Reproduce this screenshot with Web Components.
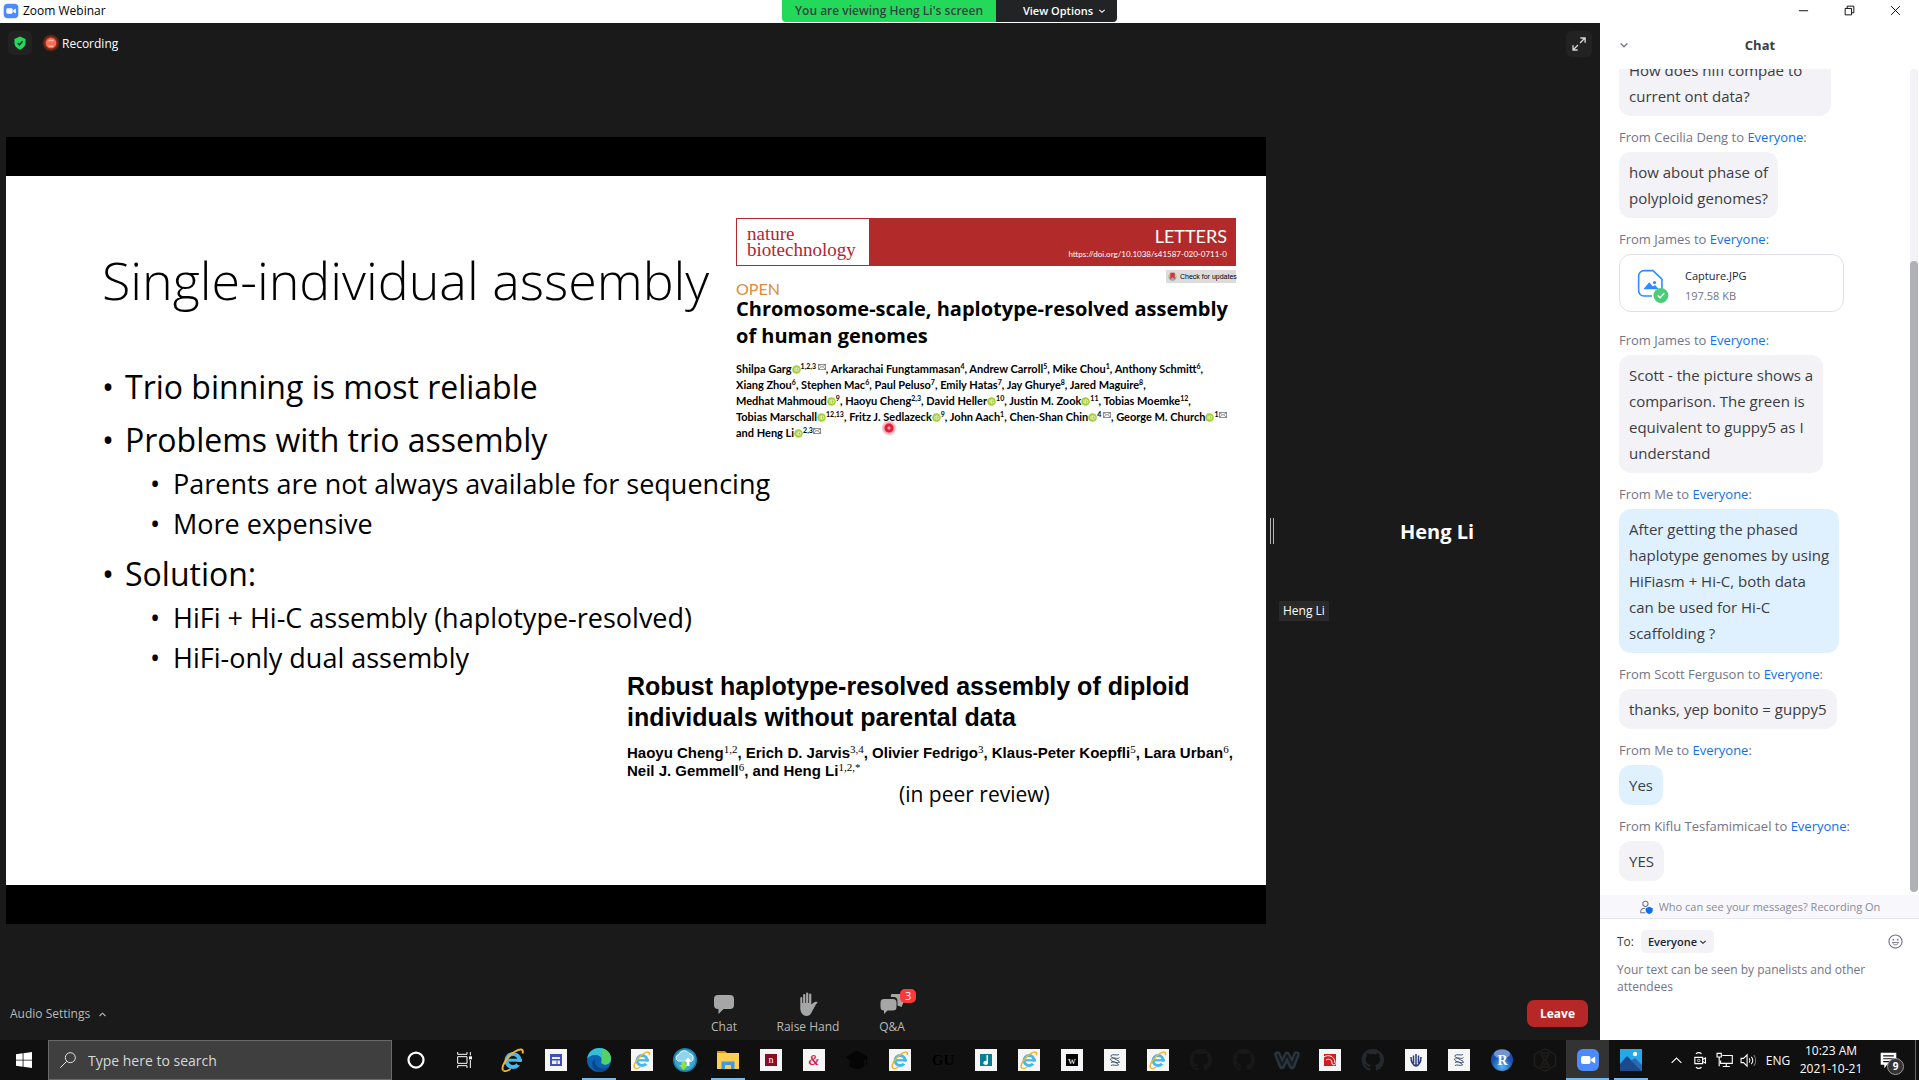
<!DOCTYPE html>
<html lang="en">
<head>
<meta charset="utf-8">
<title>Zoom Webinar</title>
<style>
html,body{margin:0;height:100%;overflow:hidden}
body{font-family:"Open Sans","Noto Sans",sans-serif;background:#1a1a1a}
</style>
</head>
<body>
<webinar-desktop></webinar-desktop>
<script>
const IE = `<circle cx="12" cy="12.5" r="6.6" fill="none" stroke="#45b8ec" stroke-width="4"/><path d="M6 12.2h15" stroke="#45b8ec" stroke-width="3"/><path d="M15 14h8v3.2h-6z" fill="var(--tile,#101010)"/><path d="M2.500 22.500C-1 20 6 8 14 3.500c5-3 9-3 7.500 2" fill="none" stroke="#f3b32a" stroke-width="2"/><path d="M2.500 22.500c2 1.500 5 0 7-1.500" fill="none" stroke="#f3b32a" stroke-width="1.600"/>`;
const TILE = inner => `<rect x="1" y="1" width="22" height="22" fill="#f6f6f6"/>${inner}`;
const CAT = `<path d="M12 .8a11.200 11.200 0 0 0-3.600 21.900c.6.1.8-.3.800-.6v-2.200c-3.100.7-3.800-1.300-3.800-1.300-.5-1.300-1.300-1.700-1.300-1.700-1-.7.1-.7.1-.7 1.100.1 1.700 1.200 1.700 1.200 1 1.700 2.700 1.200 3.300.9.1-.7.400-1.200.7-1.500-2.500-.3-5.200-1.300-5.200-5.600 0-1.200.4-2.200 1.200-3-.1-.3-.5-1.400.1-3 0 0 1-.3 3.100 1.200a10.800 10.800 0 0 1 5.700 0c2.200-1.500 3.100-1.200 3.100-1.200.6 1.600.2 2.700.1 3 .7.800 1.100 1.800 1.100 3 0 4.300-2.600 5.300-5.100 5.600.4.300.8 1 .8 2.100v3.100c0 .3.200.7.800.6A11.200 11.200 0 0 0 12 .8z"/>`;
const HELIX = `<path d="M8 7.500c2-2 6 .5 8-1M7.500 11c2.500-3 6.500 1 9-1.500M8 14.500c2.500-2 6 1.500 8.500-.5M8 17.500c2-1.500 5 .8 7.500-.5M8 7.500c-1 3 8.500 4 8.500 7M7.500 11c0 3 8 3.500 8 6" fill="none" stroke="#3c5573" stroke-width="1"/>`;
const CAM = `<rect x="1" y="1" width="22" height="22" rx="6" fill="#4a8cff"/><rect x="5" y="8" width="9.500" height="8" rx="2" fill="#fff"/><path d="M15.200 11l4-2.600v7.200l-4-2.600z" fill="#fff"/>`;
const ICONS = {
 cam: CAM,
 shield:`<path d="M12 1l9.500 4v7c0 5.500-4 9-9.500 11.500C6.500 21 2.500 17.500 2.500 12V5z" fill="#23d959"/><path d="M8 12l3 3 5.500-6" fill="none" stroke="#1a1a1a" stroke-width="2.200"/>`,
 rec:`<defs><radialGradient id="g"><stop offset=".5" stop-color="#e8401a" stop-opacity=".8"/><stop offset="1" stop-color="#e8401a" stop-opacity="0"/></radialGradient></defs><circle cx="12" cy="12" r="12" fill="url(#g)"/><circle cx="12" cy="12" r="7" fill="#ff6a55"/><path d="M7.500 9.500a5 4 0 0 1 9 0z" fill="#ffb9ad"/><path d="M8 15.500h8a5 4 0 0 1-8 0z" fill="#ffd5cf"/>`,
 min:`<path d="M2 12.500h20" stroke="#000" stroke-width="2"/>`,
 restore:`<path d="M2.500 7.500h14v14h-14zM7 7V2.500h14.500V17H17" fill="none" stroke="#000" stroke-width="2"/>`,
 close:`<path d="M2.500 2.500l19 19m0-19l-19 19" stroke="#000" stroke-width="2"/>`,
 down:`<path d="M4 8.500l8 7.500 8-7.500" fill="none" stroke="currentColor" stroke-width="3.400"/>`,
 up:`<path d="M4 16l8-7.500 8 7.500" fill="none" stroke="currentColor" stroke-width="3"/>`,
 expand:`<path d="M13.500 10.500L21 3M14 3h7.200v7.200M10.500 13.500L3 21M3 14v7h7" fill="none" stroke="#d6d6d6" stroke-width="2"/>`,
 file:`<path d="M14 25H6.500A5 5 0 0 1 1.500 20V6a5 5 0 0 1 5-5H15l8.500 8v9" transform="translate(0 .5)" fill="none" stroke="#2d8cff" stroke-width="1.500"/><path d="M6 19l5.500-6.500 3.500 4 2-1.500 3.500 4z" fill="#2d8cff"/><circle cx="16.500" cy="12.800" r="1.500" fill="#2d8cff"/><circle cx="22.500" cy="25" r="7" fill="#4ccb78"/><path d="M19.500 25l2.200 2.200 4-4.400" fill="none" stroke="#fff" stroke-width="1.300"/>`,
 privacy:`<circle cx="11" cy="6.500" r="4.500" fill="none" stroke="#747487" stroke-width="1.800"/><path d="M11 22H3c-1-5 2-8 7.500-8" fill="none" stroke="#747487" stroke-width="1.800"/><path d="M17.500 11.500l6 2.500v4c0 3-2.500 5-6 6-3.500-1-6-3-6-6v-4z" fill="#0e71eb"/>`,
 smile:`<circle cx="12" cy="12" r="10.500" fill="none" stroke="#747487" stroke-width="1.800"/><path d="M7 13.500c1.500 5 8.500 5 10 0z" fill="none" stroke="#747487" stroke-width="1.500"/><circle cx="8.500" cy="9" r="1.400" fill="#747487"/><circle cx="15.500" cy="9" r="1.400" fill="#747487"/>`,
 chat:`<path d="M6 3h12a4 4 0 0 1 4 4v6a4 4 0 0 1-4 4h-6.500L6.500 22v-5H6a4 4 0 0 1-4-4V7a4 4 0 0 1 4-4z" fill="#a6a6a6"/>`,
 hand:`<path d="M5.500 21C4 18 4.300 16 4.300 14V6a1 1 0 0 1 2 0v5h.8V3a1.100 1.100 0 0 1 2.200 0v8h.8V1.500a1.100 1.100 0 0 1 2.200 0V11h.8V2.500a1.100 1.100 0 0 1 2.200 0v10l2.500-2c1-1 4.300-1 3.700 0-2 2-3.500 5.500-5.500 9C14 25.500 8 25 5.500 21z" fill="#a6a6a6"/>`,
 qa:`<path d="M12 2h8a3.500 3.500 0 0 1 3.500 3.500v5L21.500 15l-4-1.500V9a4 4 0 0 0-4-4H11c-.5-1.500 0-3 1-3z" fill="#a6a6a6"/><path d="M4 7h9a3.500 3.500 0 0 1 3.500 3.500v4.500A3.500 3.500 0 0 1 13 18.500H7.500L4 22v-3.500A3.500 3.500 0 0 1 .5 15v-4.500A3.500 3.500 0 0 1 4 7z" fill="#a6a6a6"/>`,
 orcid:`<circle cx="12" cy="12" r="11.500" fill="#a6ce39"/><path d="M8 7v10M11.500 7.500v9h2.500a4.500 4.500 0 0 0 0-9z" fill="none" stroke="#fff" stroke-width="1.800"/>`,
 mail:`<path d="M1.500 4.500h21v15h-21zl10.500 8 10.500-8M1.500 19.500l7-8m14 8l-7-8" fill="none" stroke="#444" stroke-width="1.800"/>`,
 crossmark:`<circle cx="12" cy="12" r="11" fill="#d9c36a"/><path d="M1 12a11 11 0 0 0 22 0l-11 4z" fill="#79b5c4"/><path d="M6 2h12v17l-6-5-6 5z" fill="#d8324a"/>`,
 win:`<path d="M0 3.400L10 2v9.500H0zM11.200 1.800L24 0v11.500H11.200zM0 12.600h10V22L0 20.600zM11.200 12.600H24V24l-12.800-1.800z" fill="#fff"/>`,
 search:`<circle cx="15.500" cy="8.500" r="7.500" fill="none" stroke="#e6e6e6" stroke-width="1.500"/><path d="M10 14L.5 23.500" stroke="#e6e6e6" stroke-width="1.500"/>`,
 cortana:`<circle cx="12" cy="12" r="10" fill="none" stroke="#fff" stroke-width="3"/>`,
 taskview:`<path d="M2.500 0v3.500h14V0M2.500 24v-3.500h14V24M2.500 7h14v10h-14zM21.500 0v5M21.500 12v12" fill="none" stroke="#fff" stroke-width="1.500"/><path d="M19.500 6.500h4.500v4.500h-4.500z" fill="#fff"/>`,
 ie:IE,
 ietile:TILE(`<g transform="translate(3 3) scale(.76)" style="--tile:#f6f6f6">${IE}</g>`),
 news:TILE(`<rect x="6" y="6" width="12" height="12" fill="#3f51b5"/><path d="M8 9h8v2H8zM8 12.500h4.500V16H8zM13.500 12.500H16V16h-2.500z" fill="#eef"/>`),
 edge:`<circle cx="12" cy="12" r="12" fill="#0c62b4"/><path d="M.2 11C1 4 6 0 12 0c7 0 12 5 12 10.500 0 4-3 6-6 6s-4-1.500-3.500-3c1-4-2-6.500-6-6.500S1 9 .2 11z" fill="#35c0d8"/><path d="M14 .2C20 1 24 5.500 24 10.500c0 4-3 6-6 6s-4-1.500-3.500-3c1-5 1-9-.5-13.300z" fill="#55d267"/><path d="M8.500 11.500c-1.500 5 3 9.500 8.500 9 2-.2 4-1 5.500-2A12 12 0 0 1 12 24C7 23 4.500 18 5.500 14c.5-1.500 1.500-2.500 3-2.500z" fill="#0a4a8c"/>`,
 cloud:`<circle cx="12" cy="12" r="12" fill="#1d7ea8"/><circle cx="12" cy="12" r="10.500" fill="#3ba7cf"/><path d="M5 13a3.500 3.500 0 0 1 1-6.500 5.500 5.500 0 0 1 10-1 4.500 4.500 0 0 1 2.500 8z" fill="#8fd3ec" stroke="#e8f8ff"/><path d="M8.500 13v4H6l4.500 5 4.500-5h-2.500v-4z" fill="#8fe635"/><path d="M13.500 18v-5H12l3-3.500 3 3.500h-1.500v5z" fill="#fff"/>`,
 folder:`<path d="M1 3h8l2 2v5H1z" fill="#d9930d"/><path d="M1 5h22v16H1z" fill="#fccf54"/><path d="M5.500 13.500h13V21H15v-4H9v4H5.500z" fill="#3a9be0"/>`,
 n:TILE(`<rect x="6" y="6" width="12" height="12" fill="#8a0d24"/><text x="12" y="15" font-size="10" font-family="Liberation Serif" fill="#fff" text-anchor="middle">n</text>`),
 amp:TILE(`<text x="12" y="17" font-size="14" font-style="italic" font-weight="700" font-family="Liberation Serif" fill="#d91e4a" text-anchor="middle">&amp;</text>`),
 cap:`<path d="M12 3L1 9.500 12 16l11-6.500zM5 13v5c3 3.500 11 3.500 14 0v-5l-7 4zM21.500 10v8" fill="#050505" stroke="#050505"/>`,
 gu:`<text x="12" y="16.500" font-size="15" font-weight="700" font-family="Liberation Serif" fill="#000" text-anchor="middle">GU</text>`,
 note:TILE(`<rect x="6" y="6" width="12" height="12" fill="#0b7f93"/><path d="M12.500 7h1.500v8a2.300 2 0 1 1-1.500-2z" fill="#fff"/>`),
 w:TILE(`<rect x="6" y="6" width="12" height="12" fill="#000"/><text x="12" y="15.500" font-size="11" font-family="Liberation Serif" fill="#fff" text-anchor="middle">w</text>`),
 helix:TILE(HELIX),
 cat1:`<g fill="#191717">${CAT}</g>`,
 cat2:`<g fill="#24292e">${CAT}</g>`,
 weebly:`<path d="M2.500 6.500L7 18l5-11 5 11 4.500-11.500" fill="none" stroke="#2b3540" stroke-width="6.500" stroke-linejoin="round" stroke-linecap="round"/><path d="M2.500 6.500L7 17l5-10 5 10 4.500-10.500" fill="none" stroke="#151a1e" stroke-width="2" stroke-linejoin="round" stroke-linecap="round"/>`,
 red:TILE(`<rect x="6" y="6" width="12" height="12" fill="#d01f1f"/><path d="M6 9c4-3 11-1 11 6M8 12c3-2 6 0 6 3s4 2 4 0" fill="none" stroke="#fff"/>`),
 lotus:TILE(`<path d="M12 6v11M9.500 7.500v8M14.500 7.500v8M7 9c0 5 1.500 8 5 9 3.500-1 5-4 5-9" fill="none" stroke="#2b3c7c" stroke-width="1.500"/>`),
 r:`<defs><radialGradient id="r" cx=".5" cy=".8"><stop stop-color="#58b8f4"/><stop offset="1" stop-color="#1650b0"/></radialGradient></defs><circle cx="12" cy="12" r="11" fill="url(#r)"/><ellipse cx="12" cy="6" rx="8" ry="4.500" fill="#fff" opacity=".4"/><text x="12.500" y="16.500" font-size="14" font-weight="700" font-family="Liberation Serif" fill="#fff" text-anchor="middle">R</text>`,
 hex:`<path d="M12 .8l10.500 5.700v11L12 23.200 1.500 17.500v-11zM8 5c0 7 8 7 8 14M16 5c0 7-8 7-8 14M8 5h8M8.500 8h7M8.500 16h7M8 19h8" fill="none" stroke="#211d1d" stroke-width="1.500"/>`,
 photo:`<path d="M1 1h22v22H1z" fill="#25a9e8"/><path d="M1 16l7-8 15 15H1z" fill="#1c4a8c"/><path d="M12 13l4-3 7 7v6z" fill="#2b68b0"/><circle cx="16" cy="6" r="2.200" fill="#fff"/>`,
 trayup:`<path d="M3 16.500l9-9 9 9" fill="none" stroke="#fff" stroke-width="2"/>`,
 traycam:`<path d="M4 7.500h11v9H4zM15 10.500l4-2v7l-4-2M5.500 2.500c2.500-2 5.500-2 8 0M5.500 21.500c2.500 2 5.500 2 8 0" fill="none" stroke="#fff" stroke-width="1.600"/><circle cx="9.500" cy="12" r="1.800" fill="none" stroke="#fff" stroke-width="1.100"/>`,
 net:`<path d="M9 5h14v11H6.500v-4M14.500 16v4M9.500 20.500h10M1.500 2h6v5h-6zM4.500 7v13" fill="none" stroke="#fff" stroke-width="1.600"/>`,
 vol:`<path d="M1.500 9h3.500l5-5v16l-5-5H1.500zM13 9c1.500 2 1.500 4 0 6M16 7c2.500 3 2.500 7 0 10" fill="none" stroke="#fff" stroke-width="1.500"/><path d="M19.500 4.500c3.500 4 3.500 11 0 15" fill="none" stroke="#777" stroke-width="1.500"/>`,
 notes:`<path d="M1 1h22v17H10l-4 5v-5H1z" fill="#fff"/><path d="M4.500 5.500h15M4.500 9.500h15M4.500 13.500h15" stroke="#101010" stroke-width="1.600"/>`,
};
const define = (name, html) => customElements.define(name, class extends HTMLElement {
  connectedCallback(){
    if (this.shadowRoot) return;
    const t = document.createElement('template');
    t.innerHTML = typeof html === 'function' ? html(this) : html;
    this.attachShadow({mode:'open'}).append(t.content.cloneNode(true));
  }
});

define('ui-icon', el => {
  const s = el.getAttribute('size') || 24, vb = el.getAttribute('box') || '0 0 24 24';
  return `<style>:host{display:inline-block;width:${s}px;height:${s}px;flex:none;line-height:0}svg{width:100%;height:100%;overflow:visible}</style>
  <svg viewBox="${vb}" aria-hidden="true">${ICONS[el.getAttribute('name')]}</svg>`;
});

define('title-bar', `<style>
:host{display:grid;grid-template-columns:1fr auto 1fr;height:23px;background:#fff;align-items:center}
.name{display:flex;align-items:center;gap:4px;padding:0 0 1px 3px;font-size:12px;line-height:16px;color:#000}
.share{display:flex;height:22px;align-self:start;font-size:12px;font-weight:600;line-height:22px;border-radius:0 0 4px 4px;overflow:hidden;margin-left:-20px}
.view{background:#23d959;color:#394046;padding:0 13px}
.opts{background:#222325;color:#fff;border:0;font:inherit;font-size:11px;width:121px;display:flex;align-items:center;justify-content:flex-end;gap:5px;padding:0 11px 0 0}
.win{display:flex;justify-content:flex-end;padding:0 1px 2px 0}
.win button{border:0;background:none;width:46px;height:20px;padding:0;display:flex;align-items:center;justify-content:center}
</style>
<div class="name"><ui-icon name="cam" size="16"></ui-icon><span>Zoom Webinar</span></div>
<div class="share"><div class="view">You are viewing Heng Li's screen</div><button class="opts">View Options<ui-icon name="down" size="8"></ui-icon></button></div>
<div class="win"><button aria-label="Minimize"><ui-icon name="min" size="11"></ui-icon></button><button aria-label="Restore"><ui-icon name="restore" size="11"></ui-icon></button><button aria-label="Close"><ui-icon name="close" size="11"></ui-icon></button></div>`);

define('meeting-status', `<style>
:host{display:flex;align-items:flex-start;padding:8px 8px 0;height:106px;color:#fff;font-size:12px}
.box{background:#222;border-radius:5px;display:flex;align-items:center;justify-content:center;border:0;padding:0}
.s{width:24px;height:24px}
.e{width:26px;height:26px;margin-left:auto}
.rec{display:flex;align-items:center;gap:2px;height:24px;margin-left:10px}
</style>
<div class="box s"><ui-icon name="shield" size="14"></ui-icon></div>
<div class="rec"><ui-icon name="rec" size="18"></ui-icon><span>Recording</span></div>
<button class="box e" aria-label="Full screen"><ui-icon name="expand" size="16"></ui-icon></button>`);

const o = '<ui-icon name="orcid" size="9"></ui-icon>', m = '<ui-icon name="mail" size="8"></ui-icon>';
define('nature-paper', `<style>
:host{display:block;color:#000;white-space:nowrap}
.band{display:flex;height:48px;background:#b22b2a;color:#fff;box-sizing:border-box;border:1px solid #b22b2a}
.logo{background:#fff;color:#b02535;font:19px/16px "Liberation Serif",serif;width:132px;box-sizing:border-box;padding:7px 0 0 10px}
.let{margin-left:auto;text-align:right;padding:5px 8px 0 0;font-size:8px;line-height:12px}
.let b{display:block;font-weight:400;font-size:18px;line-height:24px}
.chk{display:flex;align-items:center;gap:3px;margin:4px 0 0 auto;width:70px;box-sizing:border-box;height:13px;background:#dcdcdc;font:7px/13px "Liberation Sans",sans-serif;padding-left:2px}
.open{color:#e08a3c;font-size:16px;line-height:12px}
h2{font-size:20px;line-height:27px;margin:0;font-weight:700;font-family:"Open Sans",sans-serif}
p{margin:12px 0 0;font:700 11px/16px Lato,"Open Sans",sans-serif;position:relative}
sup{font-size:7px;line-height:0;vertical-align:4px}
ui-icon{vertical-align:-1px}
sup ui-icon{vertical-align:-2px}
.laser{position:absolute;left:145px;top:59px;width:16px;height:16px;border-radius:8px;background:radial-gradient(#f99 0 1px,#e0203c 2px 4px,#f8a0a8 5px,#fff0 8px)}
</style>
<div class="band"><div class="logo">nature<br>biotechnology</div><div class="let"><b>LETTERS</b>https://doi.org/10.1038/s41587-020-0711-0</div></div>
<div class="chk"><ui-icon name="crossmark" size="9"></ui-icon>Check for updates</div>
<div class="open">OPEN</div>
<h2>Chromosome-scale, haplotype-resolved assembly<br>of human genomes</h2>
<p>Shilpa Garg${o}<sup>1,2,3 ${m}</sup>, Arkarachai Fungtammasan<sup>4</sup>, Andrew Carroll<sup>5</sup>, Mike Chou<sup>1</sup>, Anthony Schmitt<sup>6</sup>,<br>
Xiang Zhou<sup>6</sup>, Stephen Mac<sup>6</sup>, Paul Peluso<sup>7</sup>, Emily Hatas<sup>7</sup>, Jay Ghurye<sup>8</sup>, Jared Maguire<sup>8</sup>,<br>
Medhat Mahmoud${o}<sup>9</sup>, Haoyu Cheng<sup>2,3</sup>, David Heller${o}<sup>10</sup>, Justin M. Zook${o}<sup>11</sup>, Tobias Moemke<sup>12</sup>,<br>
Tobias Marschall${o}<sup>12,13</sup>, Fritz J. Sedlazeck${o}<sup>9</sup>, John Aach<sup>1</sup>, Chen-Shan Chin${o}<sup>4 ${m}</sup>, George M. Church${o}<sup>1${m}</sup><br>
and Heng Li${o}<sup>2,3${m}</sup><span class="laser"></span></p>`);

define('review-paper', `<style>
:host{display:block;color:#000;white-space:nowrap;font-family:"Liberation Sans",sans-serif;font-weight:700}
h2{font-size:25px;line-height:31px;margin:0}
p{margin:11px 0 0;font-size:15px;line-height:18px}
sup{font:400 11px/0 "Liberation Serif",serif;vertical-align:5px}
.note{font:400 21px/28px "Open Sans",sans-serif;padding-left:272px}
</style>
<h2>Robust haplotype-resolved assembly of diploid<br>individuals without parental data</h2>
<p>Haoyu Cheng<sup>1,2</sup>, Erich D. Jarvis<sup>3,4</sup>, Olivier Fedrigo<sup>3</sup>, Klaus-Peter Koepfli<sup>5</sup>, Lara Urban<sup>6</sup>,<br>Neil J. Gemmell<sup>6</sup>, and Heng Li<sup>1,2,*</sup></p>
<div class="note">(in peer review)</div>`);

define('talk-slide', `<style>
:host{display:block;background:#000;padding:39px 0}
.page{background:#fff;color:#000;height:709px;display:grid;grid-template-columns:634px 1fr;grid-template-rows:495px auto;padding:0 30px 0 96px;box-sizing:border-box;font-family:"Open Sans",sans-serif}
h1{font-weight:300;font-size:52px;line-height:60px;margin:74px 0 0;white-space:nowrap}
ul{list-style:none;margin:0;padding:0;white-space:nowrap}
.l1{margin-top:56px}
.l1>li{font-size:32px;line-height:42px;margin-top:11px}
li{padding-left:23px}
li::before{content:"•";float:left;margin-left:-23px}
.l1 ul li{font-size:27px;line-height:40px}
.l1 ul{padding-left:25px;margin:3px 0 -2px}
nature-paper{margin-top:42px;font-family:Lato,sans-serif}
review-paper{grid-column:1/-1;margin-left:525px}
</style>
<div class="page"><div><h1>Single-individual assembly</h1>
<ul class="l1"><li>Trio binning is most reliable</li><li>Problems with trio assembly<ul><li>Parents are not always available for sequencing</li><li>More expensive</li></ul></li><li>Solution:<ul><li>HiFi + Hi-C assembly (haplotype-resolved)</li><li>HiFi-only dual assembly</li></ul></li></ul></div>
<nature-paper></nature-paper><review-paper></review-paper></div>`);

define('speaker-tile', `<style>
:host{display:grid;grid-template-rows:1fr auto 1fr;width:320px;height:180px;color:#fff}
strong{grid-row:2;justify-self:center;font-size:20px;line-height:26px;font-weight:700;padding-top:2px}
.tag{grid-row:3;align-self:end;justify-self:start;background:#292929;font-size:12px;line-height:20px;padding:0 4px;margin-left:2px}
</style><strong><slot></slot></strong><span class="tag">Heng Li</span>`);

define('tool-button', el => `<style>
:host{display:block;position:relative}
button{border:0;background:none;padding:0;color:#b9b9b9;font:12px/16px "Open Sans",sans-serif;display:flex;flex-direction:column;align-items:center;gap:3px;width:84px}
.b{position:absolute;left:50px;top:-3px;background:#fb3b3b;color:#fff;font-size:11px;line-height:14px;padding:0 5px;border-radius:5px}
</style><button><ui-icon name="${el.getAttribute('icon')}" size="24"></ui-icon><slot></slot>${el.hasAttribute('badge')?`<span class="b">${el.getAttribute('badge')}</span>`:''}</button>`);

define('meeting-toolbar', `<style>
:host{flex:1;display:grid;grid-template-columns:1fr auto 1fr;align-items:end;padding:0 12px 5px 10px}
.audio{border:0;background:none;padding:0;color:#b9b9b9;font:12px/16px "Open Sans",sans-serif;justify-self:start;display:flex;align-items:center;gap:8px;margin-bottom:13px}
.mid{display:flex;margin-left:18px}
.leave{justify-self:end;border:0;border-radius:7px;background:#b82727;color:#fff;font:700 12px/27px "Open Sans",sans-serif;width:61px;padding:0;margin-bottom:8px}
</style>
<button class="audio">Audio Settings<ui-icon name="up" size="9"></ui-icon></button>
<div class="mid"><tool-button icon="chat">Chat</tool-button><tool-button icon="hand">Raise Hand</tool-button><tool-button icon="qa" badge="3">Q&amp;A</tool-button></div>
<button class="leave">Leave</button>`);

define('meeting-stage', `<style>
:host{flex:1;min-width:0;display:flex;flex-direction:column;background:#1a1a1a}
.row{display:flex;align-items:center;padding:0 3px 0 6px}
talk-slide{flex:1;min-width:0}
.grip{width:2px;height:26px;border:solid #b5b5b5;border-width:0 1px;margin:0 3px 0 4px}
</style><meeting-status></meeting-status><div class="row"><talk-slide></talk-slide><div class="grip"></div><speaker-tile>Heng Li</speaker-tile></div><meeting-toolbar></meeting-toolbar>`);

const FROM = `.from{font-size:13px;line-height:20px;margin:11px 0 5px;color:#747487;white-space:nowrap}
.from a{color:#0e71eb;text-decoration:none}`;
define('chat-message', el => `<style>
:host{display:flex;flex-direction:column;align-items:flex-start;flex:none}
${FROM}
.b{background:${el.hasAttribute('me')?'#dff1ff':'#f2f2f7'};border-radius:12px;padding:7px 10px;font-size:15px;line-height:26px;color:#3c3c43;min-width:${el.hasAttribute('wide')?192:0}px;white-space:nowrap}
</style>${el.hasAttribute('from')?`<div class="from">From ${el.getAttribute('from')} to <a href="#">Everyone</a>:</div>`:''}<div class="b"><slot></slot></div>`);

define('chat-file', el => `<style>
:host{display:block;flex:none;margin-bottom:7px}
${FROM}
.card{display:flex;align-items:center;gap:13px;width:225px;height:58px;box-sizing:border-box;border:1px solid #dfdfe8;border-radius:12px;padding:5px 0 0 16px;font-size:11px;line-height:20px;color:#232333}
small{display:block;font-size:11px;color:#747487}
</style><div class="from">From ${el.getAttribute('from')} to <a href="#">Everyone</a>:</div><div class="card"><ui-icon name="file" size="36" box="0 -1 32 34"></ui-icon><div><slot></slot><small>197.58 KB</small></div></div>`);

define('chat-panel', `<style>
:host{display:flex;flex-direction:column;width:319px;background:#fff;color:#3c3c43}
header{display:grid;grid-template-columns:20px 1fr 20px;height:46px;align-items:center;text-align:center;padding:0 18px 2px 19px;box-sizing:border-box;font-size:13px}
header button{border:0;background:none;padding:0;color:#747487;display:flex}
h2{font-size:13px;font-weight:700;margin:0}
.scroll{flex:1;min-height:0;display:flex;overflow:hidden}
.list{flex:1;display:flex;flex-direction:column;justify-content:flex-end;padding:0 0 14px 19px}
.track{width:8px;background:#f2f2f7;border-radius:4px;display:flex;flex-direction:column;justify-content:flex-end;margin:0 1px 3px 0}
.thumb{height:631px;border-radius:4px;background:#b0b0b8}
.who{display:flex;align-items:center;justify-content:center;gap:6px;height:24px;border:0;border-bottom:1px solid #e6e6f0;background:#f7f7fc;color:#8a8a99;font:11px "Open Sans",sans-serif;padding:0}
.compose{height:121px;padding:11px 16px 0 17px;box-sizing:border-box}
.to{display:flex;align-items:center;gap:7px;font-size:12px;line-height:23px}
.sel{position:relative;display:flex;align-items:center}
select{appearance:none;border:0;border-radius:5px;background:#f2f2f7;height:23px;width:73px;padding:0 0 0 7px;font:600 11px "Open Sans",sans-serif;color:#232333}
.sel ui-icon{position:absolute;right:7px;pointer-events:none;color:#232333}
.emo{margin-left:auto;border:0;background:none;padding:0;display:flex}
textarea{display:block;width:280px;height:60px;border:0;padding:0;margin-top:8px;resize:none;outline:0;font:12px/17px "Open Sans",sans-serif;background:none;overflow:hidden}
textarea::placeholder{color:#747487}
</style>
<header><button aria-label="Collapse"><ui-icon name="down" size="10"></ui-icon></button><h2>Chat</h2></header>
<div class="scroll"><div class="list">
<chat-message wide>How does hifi compae to<br>current ont data?</chat-message>
<chat-message from="Cecilia Deng">how about phase of<br>polyploid genomes?</chat-message>
<chat-file from="James">Capture.JPG</chat-file>
<chat-message from="James">Scott - the picture shows a<br>comparison. The green is<br>equivalent to guppy5 as I<br>understand</chat-message>
<chat-message me from="Me">After getting the phased<br>haplotype genomes by using<br>HiFiasm + Hi-C, both data<br>can be used for Hi-C<br>scaffolding ?</chat-message>
<chat-message from="Scott Ferguson">thanks, yep bonito = guppy5</chat-message>
<chat-message me from="Me">Yes</chat-message>
<chat-message from="Kiflu Tesfamimicael">YES</chat-message>
</div><div class="track"><div class="thumb"></div></div></div>
<button class="who"><ui-icon name="privacy" size="14"></ui-icon>Who can see your messages? Recording On</button>
<div class="compose"><div class="to"><label for="to">To:</label><div class="sel"><select id="to"><option>Everyone</option></select><ui-icon name="down" size="8"></ui-icon></div><button class="emo" aria-label="Emoji"><ui-icon name="smile" size="15"></ui-icon></button></div>
<textarea aria-label="Message" placeholder="Your text can be seen by panelists and other attendees"></textarea></div>`);

define('task-app', el => `<style>
:host{display:block}
button{width:43px;height:40px;border:0;padding:0;display:flex;align-items:center;justify-content:center;background:${el.hasAttribute('active')?'#333':'none'}}
${el.hasAttribute('open')?`button{background-image:linear-gradient(#76b9ed,#76b9ed);background-repeat:no-repeat;background-size:${el.hasAttribute('active')?43:34}px 2px;background-position:50% 100%}`:''}
</style><button aria-label="${el.getAttribute('label')}"><ui-icon name="${el.getAttribute('icon')}" size="24"></ui-icon></button>`);

const apps = ['ie','news','edge!','ietile','cloud','folder!','n','amp','cap','ietile','gu','note','ietile','w','helix','ietile','cat1','cat1','weebly','red','cat2','lotus','helix','r','hex','cam!*','photo!'];
define('task-bar', `<style>
:host{display:flex;height:40px;background:#101010;color:#fff;font-size:12px}
button{border:0;background:none;color:inherit;font:inherit;padding:0;display:flex;align-items:center;justify-content:center;width:48px;height:40px}
.search{display:flex;align-items:center;gap:12px;width:344px;box-sizing:border-box;background:#3f3f3f;border:1px solid #6a6a6a;padding:0 11px}
input{flex:1;min-width:0;border:0;background:none;padding:0;outline:0;font:14px "Open Sans",sans-serif;color:#ddd}
input::placeholder{color:#d8d8d8;opacity:1}
.apps{display:flex;margin-left:3px}
.tray{display:flex;margin-left:auto;align-items:center;padding-right:3px}
.tray>button{width:24px}
.tray .lang{width:36px}
.tray .clock{width:70px;line-height:18px;text-align:center;white-space:nowrap}
.tray .act{width:49px;position:relative;padding-right:4px}
.n{position:absolute;left:21px;top:18px;width:17px;height:17px;border-radius:9px;border:1px solid #999;background:#333;box-sizing:border-box;font-size:10px;line-height:15px;font-weight:700}
.desk{width:1px;height:40px;background:#666}
</style>
<button aria-label="Start"><ui-icon name="win" size="16"></ui-icon></button>
<div class="search"><ui-icon name="search" size="16"></ui-icon><input type="text" aria-label="Search" placeholder="Type here to search"></div>
<button aria-label="Cortana"><ui-icon name="cortana" size="18"></ui-icon></button><button aria-label="Task view"><ui-icon name="taskview" size="16"></ui-icon></button>
<div class="apps">${apps.map(a=>{const k=a.replace(/[!*]/g,'');return `<task-app icon="${k}" label="${k}"${a.includes('!')?' open':''}${a.includes('*')?' active':''}></task-app>`}).join('')}</div>
<div class="tray"><button aria-label="Show hidden icons"><ui-icon name="trayup" size="13"></ui-icon></button><button aria-label="Camera"><ui-icon name="traycam" size="17"></ui-icon></button><button aria-label="Network"><ui-icon name="net" size="17"></ui-icon></button><button aria-label="Volume"><ui-icon name="vol" size="17"></ui-icon></button><button class="lang">ENG</button><button class="clock">10:23 AM<br>2021-10-21</button><button class="act" aria-label="Notifications"><ui-icon name="notes" size="17"></ui-icon><span class="n">9</span></button><div class="desk"></div></div>`);

define('webinar-desktop', `<style>
:host{display:flex;flex-direction:column;height:100vh}
main{flex:1;min-height:0;display:flex}
</style><title-bar></title-bar><main><meeting-stage></meeting-stage><chat-panel></chat-panel></main><task-bar></task-bar>`);
</script>
</body>
</html>
